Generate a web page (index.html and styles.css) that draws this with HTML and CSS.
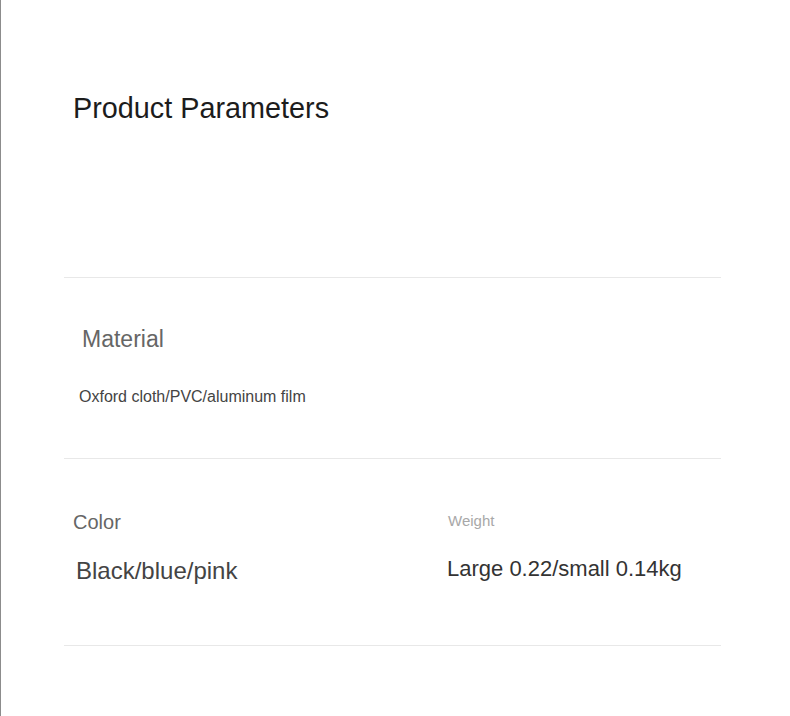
FILE: index.html
```html
<!DOCTYPE html>
<html lang="en">
<head>
<meta charset="utf-8">
<title>Product Parameters</title>
<link rel="stylesheet" href="styles.css">
</head>
<body>
<div class="page">
  <header class="head">
    <h1 class="title">Product Parameters</h1>
  </header>
  <section class="row row-material">
    <div class="label label-material">Material</div>
    <div class="value value-material">Oxford cloth/PVC/aluminum film</div>
  </section>
  <section class="row row-pair">
    <div class="cell cell-color">
      <div class="label label-color">Color</div>
      <div class="value value-color">Black/blue/pink</div>
    </div>
    <div class="cell cell-weight">
      <div class="label label-weight">Weight</div>
      <div class="value value-weight">Large 0.22/small 0.14kg</div>
    </div>
  </section>
</div>
</body>
</html>
```

FILE: styles.css
```css
* { box-sizing: border-box; }
html, body { margin: 0; padding: 0; background: #fff; }
body { font-family: "Liberation Sans", Arial, sans-serif; }

.page {
  min-height: 716px;
  border-left: 1px solid #8c8c8c;
  padding: 0 69px 0 63px;
}

.head {
  height: 278px;
  padding-top: 94px;
  padding-left: 9px;
  border-bottom: 1px solid #e8e8e8;
}
.title {
  margin: 0;
  font-size: 28.8px;
  line-height: 1;
  font-weight: 400;
  color: #1c1c1c;
}

.row { border-bottom: 1px solid #e8e8e8; }
.label, .value { line-height: 1; }

.row-material {
  height: 181px;
  padding-top: 50px;
}
.label-material { font-size: 23px; color: #666; padding-left: 18px; }
.value-material { font-size: 16px; color: #444; padding-left: 15px; margin-top: 38px; }

.row-pair {
  height: 187px;
  display: grid;
  grid-template-columns: 383px 1fr;
}
.cell-color { padding-top: 53px; }
.label-color { font-size: 20px; color: #666; padding-left: 9px; }
.value-color { font-size: 24px; color: #444; padding-left: 12px; margin-top: 27px; }

.cell-weight { padding-top: 54px; }
.label-weight { font-size: 15px; color: #a8a8a8; padding-left: 1px; }
.value-weight { font-size: 22px; color: #333; margin-top: 30px; }
```
